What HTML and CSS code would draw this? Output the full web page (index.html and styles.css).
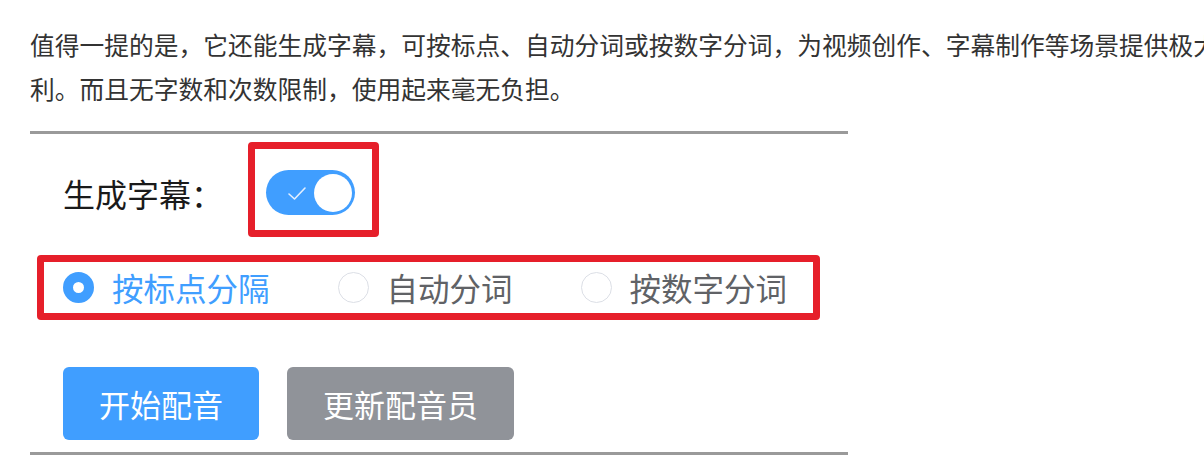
FILE: index.html
```html
<!DOCTYPE html>
<html lang="zh-CN">
<head>
    <meta charset="UTF-8">
    <meta name="viewport" content="width=device-width, initial-scale=1.0">
    <title>生成字幕</title>
    <link rel="stylesheet" href="styles.css">
</head>
<body>

    <!-- Article text -->
    <p class="intro">值得一提的是，它还能生成字幕，可按标点、自动分词或按数字分词，为视频创作、字幕制作等场景提供极大便利。而且无字数和次数限制，使用起来毫无负担。</p>

    <!-- Screenshot of the dubbing form -->
    <div class="panel">
        <div class="switch-row">
            <span class="field-label">生成字幕：</span>
            <div class="mark-box switch-box">
                <div class="switch">
                    <svg class="switch-check" width="20" height="15" viewBox="0 0 20 15">
                        <path d="M2 8 L7.5 13 L18 2" fill="none" stroke="#e3efff" stroke-width="1.6" stroke-linecap="round" stroke-linejoin="round"/>
                    </svg>
                    <span class="switch-knob"></span>
                </div>
            </div>
        </div>

        <div class="mark-box radio-box">
            <label class="radio checked"><span class="radio-dot"></span>按标点分隔</label>
            <label class="radio"><span class="radio-dot"></span>自动分词</label>
            <label class="radio"><span class="radio-dot"></span>按数字分词</label>
        </div>

        <div class="actions">
            <button class="btn btn-primary">开始配音</button>
            <button class="btn btn-grey">更新配音员</button>
        </div>
    </div>

</body>
</html>
```

FILE: styles.css
```css
body, html {
    margin: 0;
    padding: 0;
    overflow: hidden;
    background: #fff;
    font-family: "Noto Sans CJK SC", "Microsoft YaHei", sans-serif;
}

body {
    padding-left: 30px;
}

/* Article text (wider than the window, the first line runs off the edge) */
.intro {
    width: 1240px;
    margin: 22px 0 21px;
    font-size: 24.75px;
    line-height: 44px;
    color: #333;
}

/* Form panel */
.panel {
    width: 818px;
    border-top: 3px solid #9a9a9a;
    border-bottom: 3px solid #9a9a9a;
    padding: 8px 0 12px;
}

.mark-box {
    border: 7px solid #e61f2a;
    border-radius: 4px;
}

.switch-row {
    display: flex;
    align-items: center;
    margin-left: 33px;
}

.field-label {
    font-size: 32px;
    color: #1a1a1a;
    margin-right: 25px;
    margin-top: 6px;
}

.switch-box {
    padding: 21px 17px 15px 11px;
}

.switch {
    width: 89px;
    height: 45px;
    box-sizing: border-box;
    padding: 0 3px 0 21px;
    border-radius: 23px;
    background: #409eff;
    display: flex;
    align-items: center;
    justify-content: space-between;
}

.switch-check {
    margin-top: 2px;
}

.switch-knob {
    width: 38px;
    height: 38px;
    border-radius: 50%;
    background: #fff;
}

/* Radio group */
.radio-box {
    width: 783px;
    box-sizing: border-box;
    margin: 18px 0 0 7px;
    padding: 10px 0 10px 19px;
    display: flex;
    align-items: center;
    gap: 68px;
}

.radio {
    display: flex;
    align-items: center;
    gap: 18px;
    font-size: 31.5px;
    line-height: 31px;
    color: #606266;
}

.radio-dot {
    width: 31px;
    height: 31px;
    box-sizing: border-box;
    border: 1.5px solid #dcdfe6;
    border-radius: 50%;
    background: #fff;
}

.radio.checked {
    color: #409eff;
}

.radio.checked .radio-dot {
    border: 10.5px solid #409eff;
}

/* Buttons */
.actions {
    display: flex;
    gap: 28px;
    margin: 47px 0 0 33px;
}

.btn {
    height: 73px;
    padding: 0 36px;
    border: none;
    border-radius: 6px;
    font-family: inherit;
    font-size: 31px;
    color: #fff;
}

.btn-primary {
    background: #409eff;
}

.btn-grey {
    background: #909399;
}
```
